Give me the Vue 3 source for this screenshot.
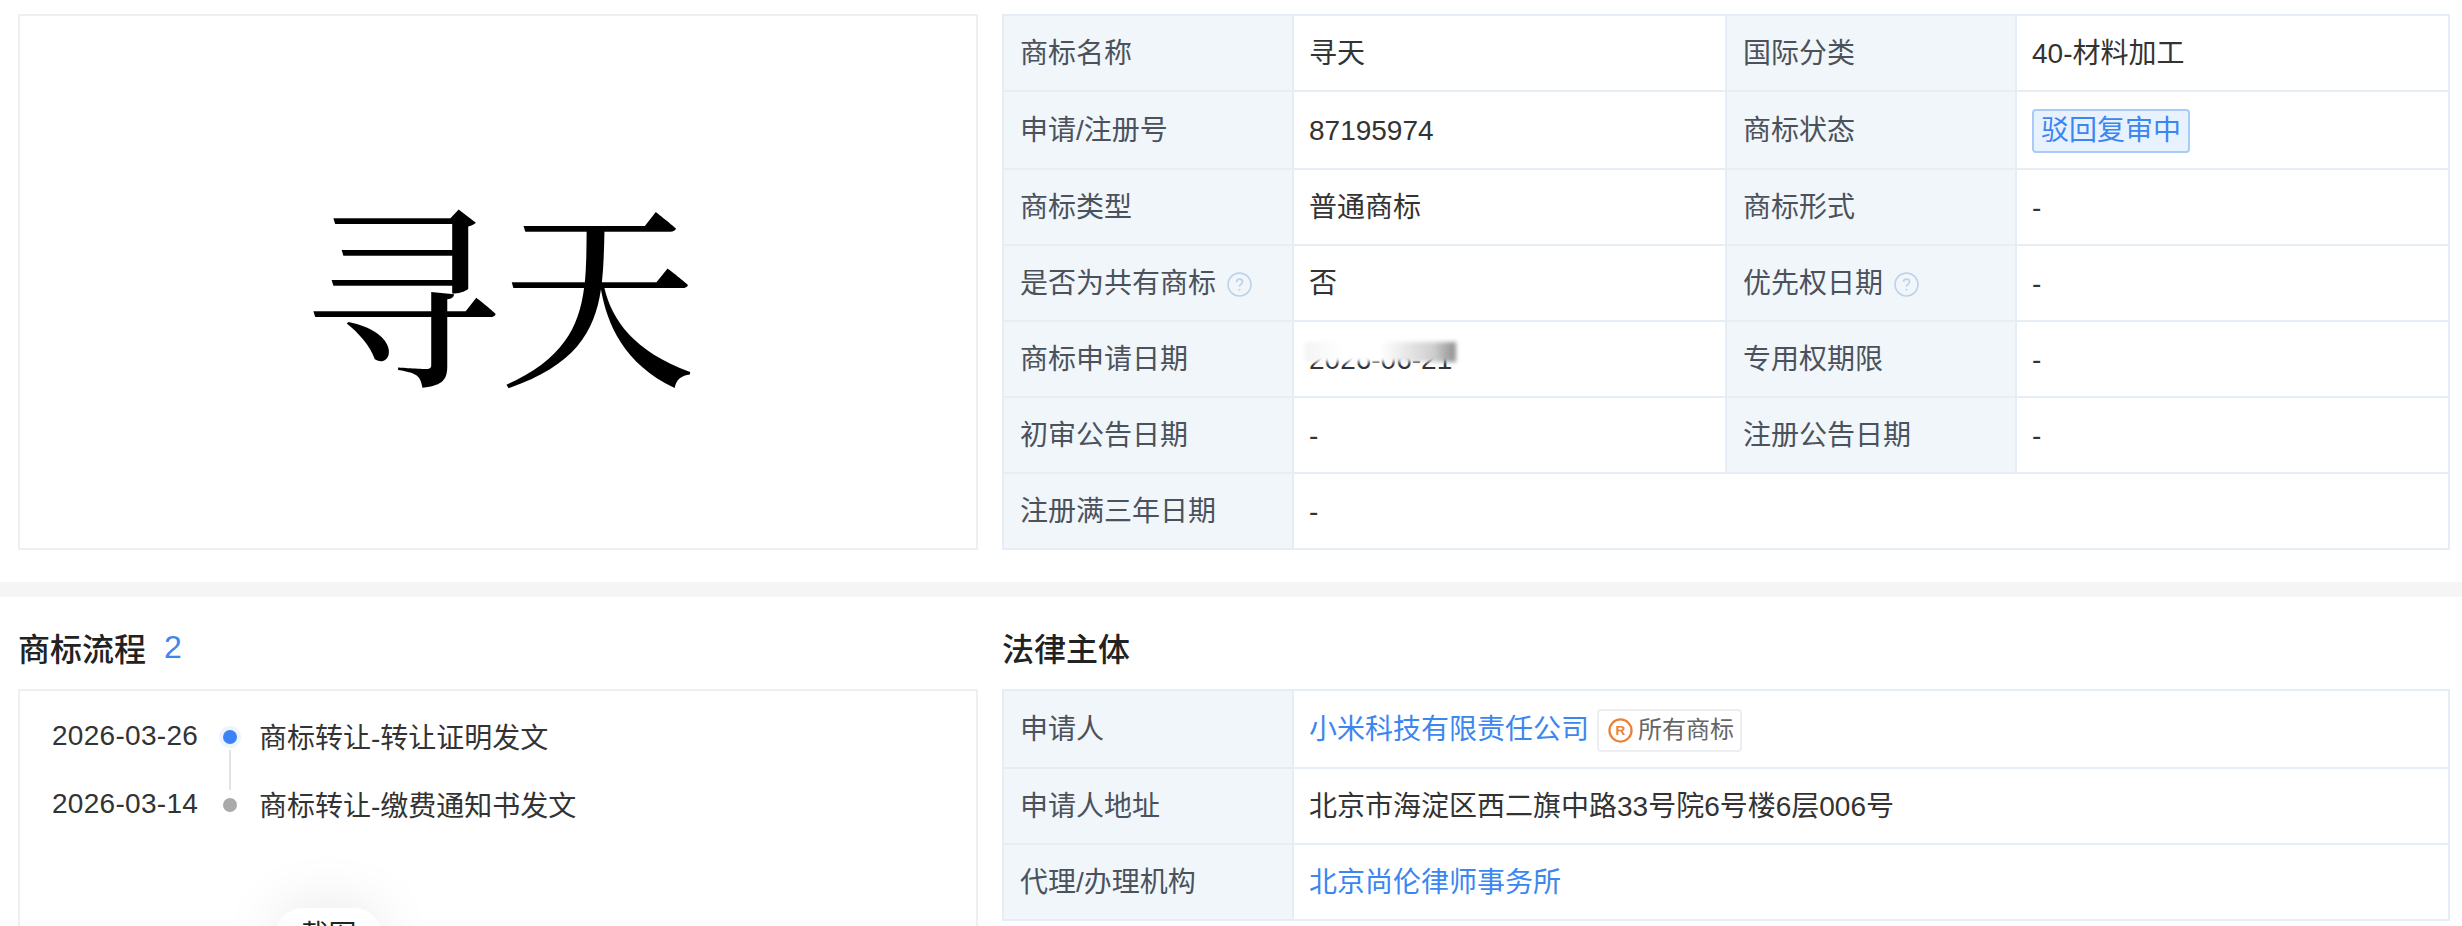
<template>
  <div class="page">
    <section class="top">
      <div class="logo-box">
        <span class="logo-text">寻天</span>
      </div>
      <table class="info-table">
        <colgroup>
          <col class="col-label" />
          <col class="col-value" />
          <col class="col-label" />
          <col />
        </colgroup>
        <tbody>
          <tr v-for="(row, i) in infoRows" :key="i" :class="{ tall: row.some(c => c.tag) }">
            <template v-for="cell in row" :key="cell.label">
              <th>
                <span class="label-inner">
                  {{ cell.label }}
                  <svg v-if="cell.help" class="help-icon" viewBox="0 0 24 24" fill="none">
                    <circle cx="12" cy="12" r="11" stroke="#bcd3e8" stroke-width="1.6" />
                    <path d="M9.2 9.6c0-1.7 1.2-2.8 2.9-2.8s2.8 1 2.8 2.5c0 2.4-2.9 2.4-2.9 4.9" stroke="#bcd3e8" stroke-width="1.6" />
                    <circle cx="12" cy="17" r="1" fill="#bcd3e8" />
                  </svg>
                </span>
              </th>
              <td :colspan="row.length === 1 ? 3 : 1">
                <span v-if="cell.tag" class="status-tag">{{ cell.value }}</span>
                <span v-else-if="cell.blurred" class="blurred">
                  {{ cell.value }}
                  <i class="blur-mask"></i>
                </span>
                <template v-else>{{ cell.value }}</template>
              </td>
            </template>
          </tr>
        </tbody>
      </table>
    </section>

    <div class="divider"></div>

    <section class="bottom">
      <div class="left-col">
        <h3 class="section-title">商标流程<span class="count">2</span></h3>
        <div class="flow-box">
          <div v-for="(item, i) in flow" :key="item.date" class="flow-row">
            <span class="flow-date">{{ item.date }}</span>
            <span class="flow-dot" :class="{ active: i === 0, 'has-line': i < flow.length - 1 }"></span>
            <span class="flow-text">{{ item.text }}</span>
          </div>
          <div class="shot-btn">截图</div>
        </div>
      </div>
      <div class="right-col">
        <h3 class="section-title">法律主体</h3>
        <table class="info-table">
          <colgroup>
            <col class="col-label" />
            <col />
          </colgroup>
          <tbody>
            <tr class="tall">
              <th>申请人</th>
              <td>
                <div class="applicant">
                  <a class="link">小米科技有限责任公司</a>
                  <span class="all-marks">
                    <svg class="r-icon" viewBox="0 0 24 24" fill="none">
                      <circle cx="12" cy="12" r="10.6" stroke="#e8823c" stroke-width="2.2" />
                      <text x="12" y="16.6" text-anchor="middle" class="r-letter">R</text>
                    </svg>
                    所有商标
                  </span>
                </div>
              </td>
            </tr>
            <tr>
              <th>申请人地址</th>
              <td>北京市海淀区西二旗中路33号院6号楼6层006号</td>
            </tr>
            <tr>
              <th>代理/办理机构</th>
              <td><a class="link">北京尚伦律师事务所</a></td>
            </tr>
          </tbody>
        </table>
      </div>
    </section>
  </div>
</template>

<script setup>
const infoRows = [
  [{ label: '商标名称', value: '寻天' }, { label: '国际分类', value: '40-材料加工' }],
  [{ label: '申请/注册号', value: '87195974' }, { label: '商标状态', value: '驳回复审中', tag: true }],
  [{ label: '商标类型', value: '普通商标' }, { label: '商标形式', value: '-' }],
  [{ label: '是否为共有商标', value: '否', help: true }, { label: '优先权日期', value: '-', help: true }],
  [{ label: '商标申请日期', value: '2026-06-21', blurred: true }, { label: '专用权期限', value: '-' }],
  [{ label: '初审公告日期', value: '-' }, { label: '注册公告日期', value: '-' }],
  [{ label: '注册满三年日期', value: '-' }]
]

const flow = [
  { date: '2026-03-26', text: '商标转让-转让证明发文' },
  { date: '2026-03-14', text: '商标转让-缴费通知书发文' }
]
</script>

<style scoped>
.page {
  width: 2462px;
  height: 926px;
  overflow: hidden;
  background: #fff;
  color: #333;
  font-family: "Liberation Sans", "Noto Sans CJK SC", sans-serif;
  font-size: 28px;
}

.top,
.bottom {
  display: grid;
  grid-template-columns: 960px 1448px;
  column-gap: 24px;
  padding: 0 12px 0 18px;
}

.top {
  padding-top: 14px;
}

.logo-box {
  display: flex;
  align-items: center;
  justify-content: center;
  border: 2px solid #eeeff1;
  padding: 8px 0 0 4px;
}

.logo-text {
  font-family: "Noto Serif CJK SC", "Noto Sans CJK SC", serif;
  font-size: 196px;
  font-weight: 500;
  line-height: 1;
  color: #000;
}

.info-table {
  width: 1448px;
  border-collapse: collapse;
  table-layout: fixed;
}

.col-label {
  width: 290px;
}

.col-value {
  width: 433px;
}

.info-table th,
.info-table td {
  height: 72px;
  padding: 2px 15px 0;
  border: 2px solid #e6edf4;
  font-size: 28px;
  font-weight: 400;
  line-height: 36px;
  text-align: left;
}

.info-table .tall th,
.info-table .tall td {
  height: 74px;
}

.info-table th {
  padding-left: 16px;
  background: #f1f6fb;
  color: #4b525b;
}

.label-inner {
  display: flex;
  align-items: center;
}

.help-icon {
  width: 25px;
  height: 25px;
  margin-left: 11px;
}

.status-tag {
  display: inline-block;
  height: 44px;
  padding: 0 7px;
  border: 2px solid #a9cbf8;
  border-radius: 4px;
  box-sizing: border-box;
  background: #e8f2fe;
  color: #3c86f0;
  line-height: 40px;
  vertical-align: middle;
}

.blurred {
  position: relative;
  display: inline-block;
}

.blur-mask {
  position: absolute;
  left: -4px;
  right: -4px;
  top: 0;
  height: 20px;
  background: linear-gradient(90deg, #f4f4f4 0%, #fff 25%, #fff 50%, #cfcfcf 85%, #8f8f8f 100%);
  filter: blur(2px);
}

.divider {
  height: 15px;
  margin-top: 32px;
  background: #f5f5f5;
}

.bottom {
  padding-top: 30px;
}

.section-title {
  display: flex;
  align-items: center;
  height: 40px;
  margin: 0 0 22px;
  color: #222;
  font-size: 32px;
  font-weight: 500;
}

.count {
  margin-left: 18px;
  color: #3c86f0;
  font-weight: 500;
}

.flow-box {
  position: relative;
  height: 400px;
  padding: 12px 32px 0;
  border: 2px solid #eeeff1;
  box-sizing: border-box;
}

.flow-row {
  display: flex;
  align-items: center;
  height: 68px;
}

.flow-date {
  width: 146px;
  margin-right: 25px;
  padding-bottom: 2px;
  letter-spacing: 0.3px;
  white-space: nowrap;
}

.flow-text {
  padding-bottom: 2px;
}

.flow-dot {
  position: relative;
  width: 14px;
  height: 14px;
  margin-right: 22px;
  border-radius: 50%;
  background: #aaa;
}

.flow-dot.active {
  background: #3b82f6;
  box-shadow: 0 0 0 4px #eef4fe;
}

.flow-dot.has-line::after {
  content: "";
  position: absolute;
  left: 6px;
  top: 20px;
  width: 2px;
  height: 40px;
  background: #e3e3e3;
}

.shot-btn {
  position: absolute;
  left: 255px;
  top: 217px;
  width: 107px;
  height: 56px;
  border-radius: 28px;
  background: #fff;
  box-shadow: 0 0 60px rgba(0, 0, 0, 0.1);
  color: #222;
  line-height: 56px;
  text-align: center;
}

.applicant {
  display: flex;
  align-items: center;
  gap: 8px;
}

.link {
  color: #3c86f0;
}

.all-marks {
  display: flex;
  align-items: center;
  height: 43px;
  padding: 0 6px 0 9px;
  border: 2px solid #eceef1;
  border-radius: 4px;
  box-sizing: border-box;
  color: #666;
  font-size: 24px;
}

.r-icon {
  width: 25px;
  height: 25px;
  margin-right: 5px;
}

.r-letter {
  fill: #e8823c;
  font-size: 13px;
  font-weight: 700;
  font-family: "Liberation Sans", sans-serif;
}
</style>

<style>
html,
body {
  margin: 0;
  overflow: hidden;
}
</style>
